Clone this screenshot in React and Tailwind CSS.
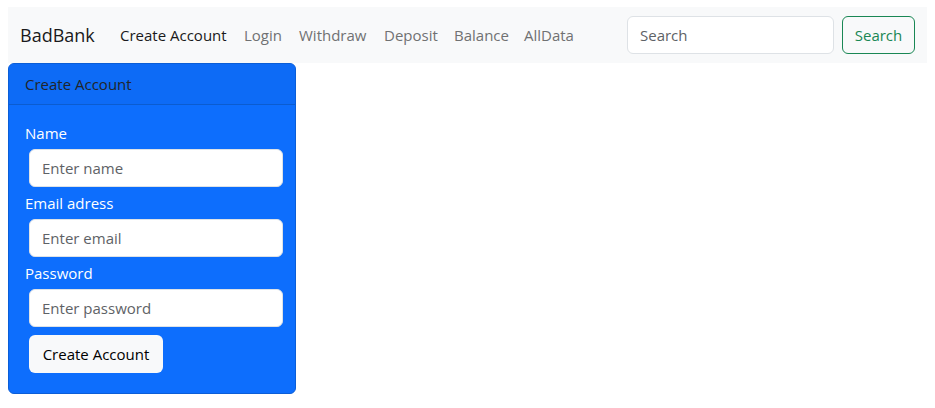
import React from "react";

const font = { fontFamily: '"Open Sans", "Noto Sans", sans-serif' };

function NavLink({ children, active, w }) {
  return (
    <a
      className={
        "block px-2 py-2 leading-6 whitespace-nowrap " +
        (active ? "text-[#1a1a1b]" : "text-[#707172]")
      }
    >
      <span className={"block " + w}>{children}</span>
    </a>
  );
}

function Field({ label, placeholder }) {
  return (
    <>
      <label className="block leading-6 text-white">{label}</label>
      <input
        className="m-1 block h-[38px] w-full rounded-md border border-[#dee2e6] bg-white px-3 text-[#212529] placeholder:text-[#5e6266] outline-none"
        placeholder={placeholder}
      />
    </>
  );
}

export default function App() {
  return (
    <div className="min-h-[408px] bg-white px-2 pt-[7px] text-[15px] text-[#212529]" style={font}>
      <nav className="flex h-14 items-center bg-[#f8f9fa] px-3">
        <span className="mr-4 block w-[76px] whitespace-nowrap text-[18px] leading-[30px] text-[#1a1a1b]">
          BadBank
        </span>
        <div className="flex items-center">
          <NavLink active w="w-[108px]">Create Account</NavLink>
          <NavLink w="w-[39px]">Login</NavLink>
          <NavLink w="w-[69px]">Withdraw</NavLink>
          <NavLink w="w-[54px]">Deposit</NavLink>
          <NavLink w="w-[54px]">Balance</NavLink>
          <NavLink w="w-[51px]">AllData</NavLink>
        </div>
        <div className="ml-auto flex items-center">
          <input
            className="mr-2 h-[38px] w-[207px] rounded-md border border-[#dee2e6] bg-white px-3 outline-none placeholder:text-[#5e6266]"
            placeholder="Search"
          />
          <button className="h-[38px] w-[73px] rounded-md border border-[#198754] text-[#198754]">
            Search
          </button>
        </div>
      </nav>
      <div className="w-[288px] overflow-hidden rounded-md border border-[#0b5ed7] bg-[#0d6efd]">
        <div className="border-b border-[#0b5cd0] bg-[#0d6bf6] px-4 py-2 leading-6 text-[#212529]">
          Create Account
        </div>
        <div className="p-4">
          <Field label="Name" placeholder="Enter name" />
          <Field label="Email adress" placeholder="Enter email" />
          <Field label="Password" placeholder="Enter password" />
          <button className="m-1 h-[38px] w-[134px] rounded-md bg-[#f8f9fa] text-[#000]">
            Create Account
          </button>
        </div>
      </div>
    </div>
  );
}
